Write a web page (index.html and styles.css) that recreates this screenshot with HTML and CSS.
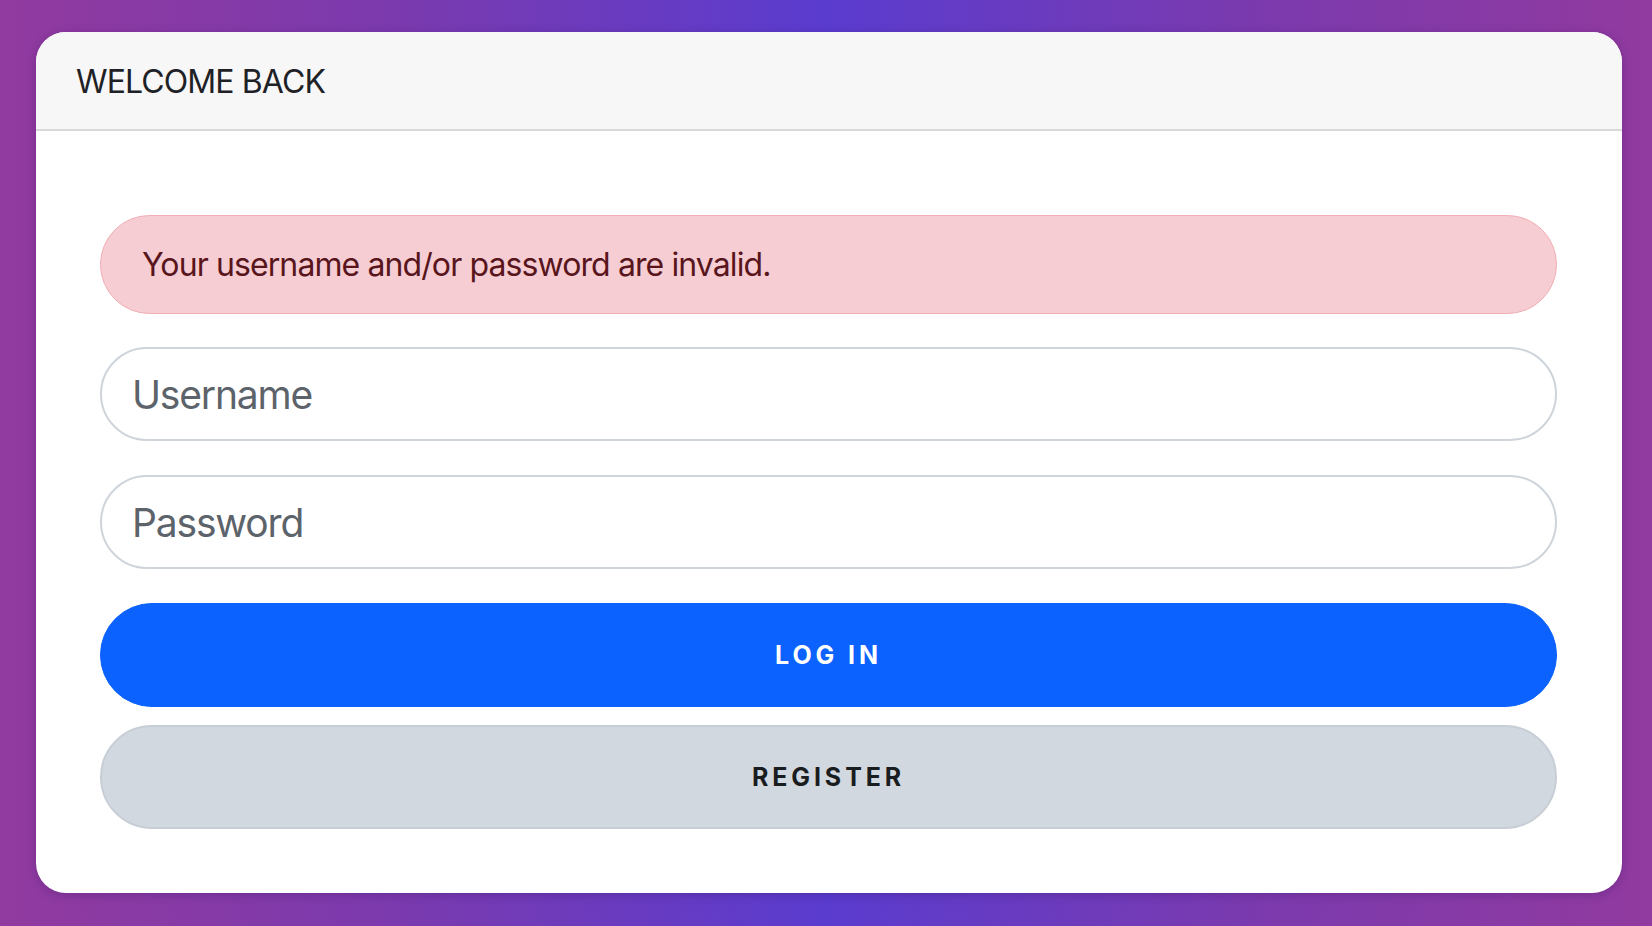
FILE: index.html
```html
<!DOCTYPE html>
<html lang="en">
<head>
<meta charset="utf-8">
<title>Welcome back</title>
<link rel="stylesheet" href="styles.css">
</head>
<body>
  <main class="card">
    <header class="card-header">WELCOME BACK</header>
    <section class="card-body">
      <div class="alert">Your username and/or password are invalid.</div>
      <input class="field field-user" type="text" placeholder="Username">
      <input class="field field-pass" type="password" placeholder="Password">
      <button class="btn btn-primary" type="button">LOG IN</button>
      <button class="btn btn-secondary" type="button">REGISTER</button>
    </section>
  </main>
</body>
</html>
```

FILE: styles.css
```css
* { box-sizing: border-box; }
html, body { height: 100%; }
body {
  margin: 0;
  padding: 32px 30px 33px 36px;
  background: linear-gradient(90deg, #913a9f 0%, #7b3aae 24%, #5a3ccf 50%, #7b3aae 76%, #913a9f 100%);
  font-family: Inter, "Noto Sans", "Liberation Sans", sans-serif;
  color: #1e2125;
}
.card {
  height: 100%;
  background: #ffffff;
  border-radius: 30px;
  overflow: hidden;
  display: flex;
  flex-direction: column;
  box-shadow: 0 2px 10px rgba(40, 10, 80, 0.25);
}
.card-header {
  height: 99px;
  flex: none;
  background: #f7f7f7;
  border-bottom: 2px solid #d9d9d9;
  padding: 1px 40px 0;
  display: flex;
  align-items: center;
  font-size: 32px;
  font-weight: 400;
  letter-spacing: -0.028em;
  color: #1e2125;
}
.card-body {
  padding: 84px 65px 64px 64px;
  display: flex;
  flex-direction: column;
}
.alert {
  height: 99px;
  flex: none;
  border: 1px solid #f1aeb5;
  background: #f5cdd2;
  color: #58151c;
  border-radius: 999px;
  padding: 0 41px;
  display: flex;
  align-items: center;
  font-size: 32px;
  letter-spacing: -0.028em;
  margin-bottom: 33px;
}
.field {
  height: 94px;
  flex: none;
  border: 2px solid #ced4da;
  border-radius: 999px;
  padding: 0 30px;
  font-family: inherit;
  font-size: 39px;
  letter-spacing: -0.03em;
  color: #212529;
  background: #fff;
  outline: none;
  margin-bottom: 34px;
}
.field::placeholder { color: #5c636a; opacity: 1; }
.btn {
  height: 104px;
  flex: none;
  border-radius: 999px;
  font-family: inherit;
  font-size: 25px;
  font-weight: 700;
  letter-spacing: 3.9px;
  cursor: pointer;
  padding: 0;
}
.btn-primary {
  background: #0b62fe;
  border: 1px solid #0b62fe;
  color: #ffffff;
  margin-bottom: 18px;
}
.btn-secondary {
  background: #d2d8e0;
  border: 2px solid #c8ced6;
  color: #1a1d20;
}
```
